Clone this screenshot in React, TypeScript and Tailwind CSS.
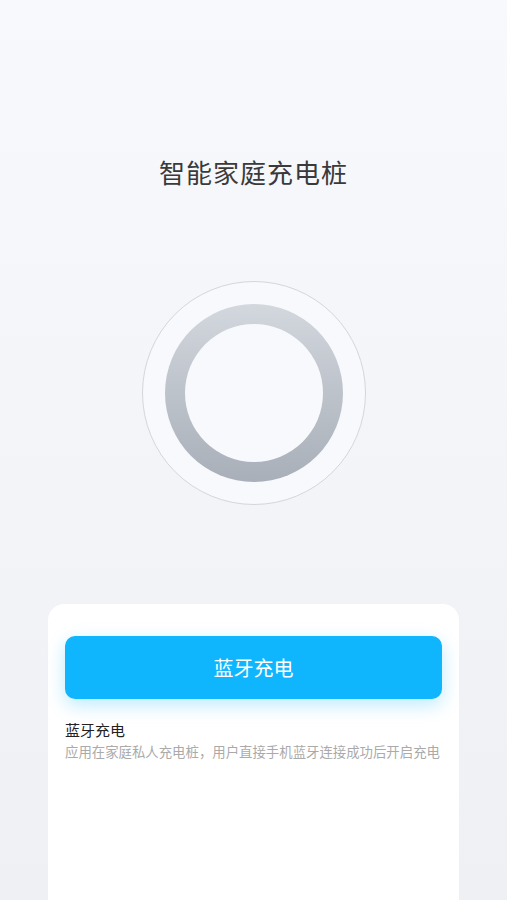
const FONT = { fontFamily: '"Noto Sans CJK SC", "Noto Sans", sans-serif' };

const ChargerRing = () => (
  <div className="flex h-[224px] w-[224px] items-center justify-center rounded-full border border-[#d4d6da] bg-[#f7f9fc]">
    <div className="flex h-[178px] w-[178px] items-center justify-center rounded-full bg-gradient-to-b from-[#d3d7de] to-[#a8afb8]">
      <div className="h-[138px] w-[138px] rounded-full bg-[#f8f9fc]" />
    </div>
  </div>
);

export default function App() {
  return (
    <div
      className="flex h-[900px] w-full flex-col items-center overflow-hidden bg-gradient-to-b from-[#f8f9fd] to-[#eef0f4]"
      style={FONT}
    >
      <h1 className="mt-[154px] text-[26px] leading-[36px] tracking-[1px] text-[#3a3a3a]">智能家庭充电桩</h1>

      <div className="mt-[91px]">
        <ChargerRing />
      </div>

      <div className="mt-[99px] flex w-[411px] flex-1 flex-col rounded-t-[16px] bg-white px-[17px] pt-[32px]">
        <button className="h-[63px] w-full rounded-[10px] bg-[#10b6fd] text-[20px] text-white shadow-[0_6px_18px_rgba(16,182,253,0.28)]">
          蓝牙充电
        </button>
        <div className="mt-[21px] text-[15px] leading-[20px] text-[#222222]">蓝牙充电</div>
        <div className="mt-[2px] whitespace-nowrap text-[13.4px] leading-[18px] text-[#aaaaaa]">
          应用在家庭私人充电桩，用户直接手机蓝牙连接成功后开启充电
        </div>
      </div>
    </div>
  );
}
